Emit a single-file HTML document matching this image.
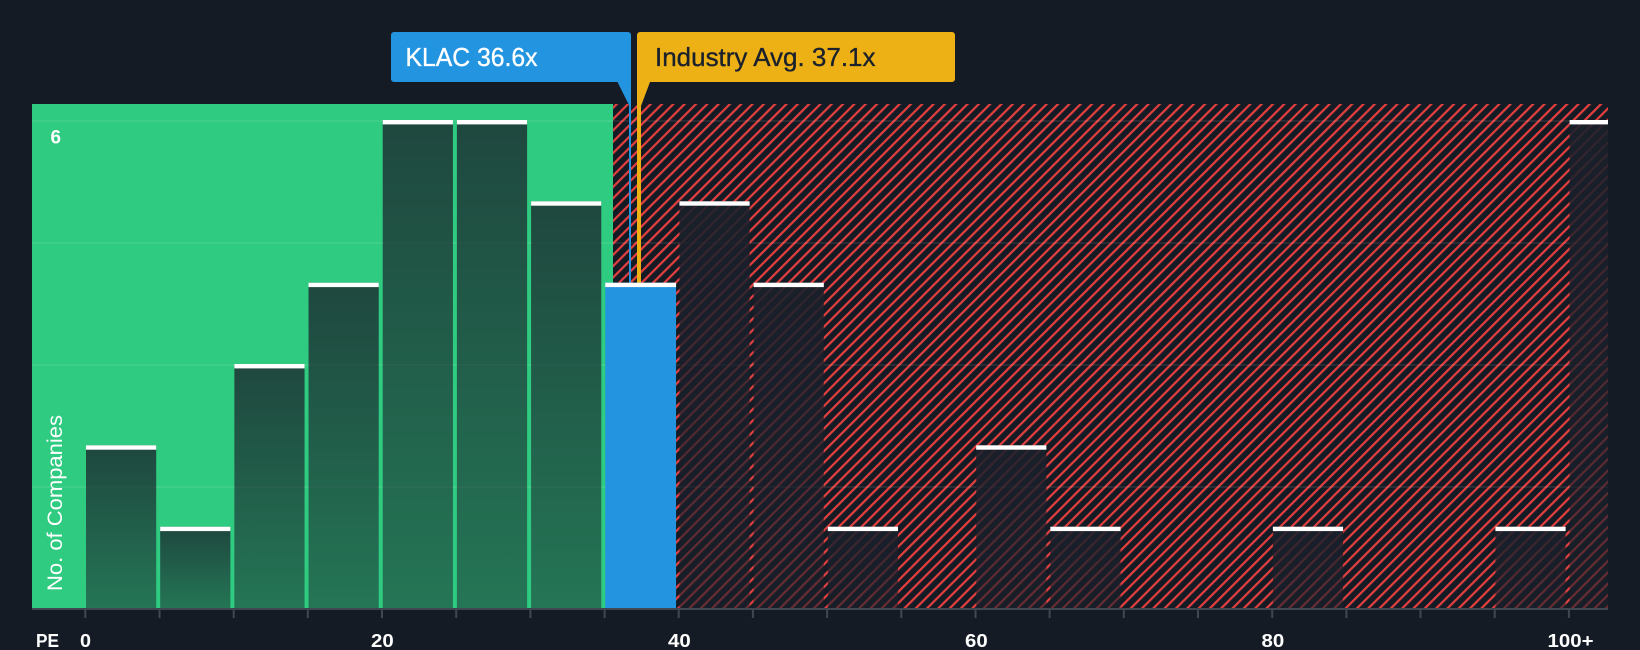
<!DOCTYPE html>
<html><head><meta charset="utf-8"><style>
html,body{margin:0;padding:0;background:#151b24;width:1640px;height:650px;overflow:hidden}
svg{display:block}
text{font-family:"Liberation Sans",sans-serif}
</style></head><body>
<svg width="1640" height="650" viewBox="0 0 1640 650" xmlns="http://www.w3.org/2000/svg">
<defs>
<pattern id="h" width="8" height="8" patternUnits="userSpaceOnUse" patternTransform="translate(6.5 0) rotate(45)"><rect width="8" height="8" fill="#151b24"/><rect x="0" width="2.2" height="8" fill="#e5403f"/></pattern>
<linearGradient id="b" x1="0" y1="0" x2="0" y2="1"><stop offset="0" stop-color="#1a202b" stop-opacity=".77"/><stop offset="1" stop-color="#1a202b" stop-opacity=".5"/></linearGradient>
<linearGradient id="r" x1="0" y1="0" x2="0" y2="1"><stop offset="0" stop-color="#1a202b" stop-opacity=".9"/><stop offset="1" stop-color="#1a202b" stop-opacity=".6"/></linearGradient>
</defs>
<rect width="1640" height="650" fill="#151b24"/>
<rect x="32" y="104" width="581" height="504" fill="#2ecb80"/>
<rect x="613" y="104" width="995" height="504" fill="url(#h)"/>
<g fill="#fff" fill-opacity=".08">
<rect x="32" y="120" width="1576" height="2"/><rect x="32" y="242" width="1576" height="2"/><rect x="32" y="364" width="1576" height="2"/><rect x="32" y="486" width="1576" height="2"/>
</g>
<g fill="url(#b)">
<rect x="86" y="445.3" width="70.2" height="162.7"/>
<rect x="160.18" y="526.7" width="70.2" height="81.3"/>
<rect x="234.36" y="364" width="70.2" height="244"/>
<rect x="308.54" y="282.7" width="70.2" height="325.3"/>
<rect x="382.72" y="120" width="70.2" height="488"/>
<rect x="456.9" y="120" width="70.2" height="488"/>
<rect x="531.08" y="201.3" width="70.2" height="406.7"/>
</g>
<g fill="url(#r)">
<rect x="679.44" y="201.3" width="70.2" height="406.7"/>
<rect x="753.62" y="282.7" width="70.2" height="325.3"/>
<rect x="827.8" y="526.7" width="70.2" height="81.3"/>
<rect x="976.16" y="445.3" width="70.2" height="162.7"/>
<rect x="1050.34" y="526.7" width="70.2" height="81.3"/>
<rect x="1272.88" y="526.7" width="70.2" height="81.3"/>
<rect x="1495.42" y="526.7" width="70.2" height="81.3"/>
<rect x="1569.6" y="120" width="38.4" height="488"/>
</g>
<rect x="629" y="104" width="2" height="180" fill="#2394e0"/>
<rect x="637" y="104" width="4" height="180" fill="#edb116"/>
<rect x="605.26" y="282.7" width="70.8" height="325.3" fill="#2394e0"/>
<g fill="#fff">
<rect x="86" y="445.3" width="70.2" height="4.4"/>
<rect x="160.18" y="526.7" width="70.2" height="4.4"/>
<rect x="234.36" y="364" width="70.2" height="4.4"/>
<rect x="308.54" y="282.7" width="70.2" height="4.4"/>
<rect x="382.72" y="120" width="70.2" height="4.4"/>
<rect x="456.9" y="120" width="70.2" height="4.4"/>
<rect x="531.08" y="201.3" width="70.2" height="4.4"/>
<rect x="605.26" y="282.7" width="70.8" height="4.4"/>
<rect x="679.44" y="201.3" width="70.2" height="4.4"/>
<rect x="753.62" y="282.7" width="70.2" height="4.4"/>
<rect x="827.8" y="526.7" width="70.2" height="4.4"/>
<rect x="976.16" y="445.3" width="70.2" height="4.4"/>
<rect x="1050.34" y="526.7" width="70.2" height="4.4"/>
<rect x="1272.88" y="526.7" width="70.2" height="4.4"/>
<rect x="1495.42" y="526.7" width="70.2" height="4.4"/>
<rect x="1569.6" y="120" width="38.4" height="4.4"/>
</g>
<rect x="32" y="608" width="1576" height="2" fill="#414751"/>
<g fill="#414751">
<rect x="84.3" y="610" width="2" height="8"/><rect x="158.5" y="610" width="2" height="8"/><rect x="232.7" y="610" width="2" height="8"/><rect x="306.8" y="610" width="2" height="8"/><rect x="381" y="610" width="2" height="8"/><rect x="455.2" y="610" width="2" height="8"/><rect x="529.4" y="610" width="2" height="8"/><rect x="603.6" y="610" width="2" height="8"/><rect x="677.7" y="610" width="2" height="8"/><rect x="751.9" y="610" width="2" height="8"/><rect x="826.1" y="610" width="2" height="8"/><rect x="900.3" y="610" width="2" height="8"/><rect x="974.5" y="610" width="2" height="8"/><rect x="1048.6" y="610" width="2" height="8"/><rect x="1122.8" y="610" width="2" height="8"/><rect x="1197" y="610" width="2" height="8"/><rect x="1271.2" y="610" width="2" height="8"/><rect x="1345.4" y="610" width="2" height="8"/><rect x="1419.5" y="610" width="2" height="8"/><rect x="1493.7" y="610" width="2" height="8"/><rect x="1567.9" y="610" width="2" height="8"/>
</g>
<path d="M394 32H628a3 3 0 0 1 3 3V106L629.5 106L617.5 82H394a3 3 0 0 1-3-3V35a3 3 0 0 1 3-3Z" fill="#2394e0"/>
<path d="M640 32H952a3 3 0 0 1 3 3V79a3 3 0 0 1-3 3H650L641 106H637V35a3 3 0 0 1 3-3Z" fill="#edb116"/>
<text x="405.5" y="66" font-size="26" fill="#fff" stroke="#fff" stroke-width=".35" textLength="132" lengthAdjust="spacingAndGlyphs">KLAC 36.6x</text>
<text x="655" y="66" font-size="26" fill="#1b212c" stroke="#1b212c" stroke-width=".35" textLength="220.5" lengthAdjust="spacingAndGlyphs">Industry Avg. 37.1x</text>
<text x="50.5" y="143.5" font-size="19" font-weight="bold" fill="#fff" textLength="10.5" lengthAdjust="spacingAndGlyphs">6</text>
<text transform="translate(62 591) rotate(-90)" font-size="21" fill="#fff" textLength="176" lengthAdjust="spacingAndGlyphs">No. of Companies</text>
<g font-size="18.5" font-weight="bold" fill="#fff">
<text x="36" y="647" textLength="23" lengthAdjust="spacingAndGlyphs">PE</text>
<text x="80" y="647" textLength="11" lengthAdjust="spacingAndGlyphs">0</text>
<text x="371" y="647" textLength="22.7" lengthAdjust="spacingAndGlyphs">20</text>
<text x="668" y="647" textLength="22.7" lengthAdjust="spacingAndGlyphs">40</text>
<text x="965" y="647" textLength="22.7" lengthAdjust="spacingAndGlyphs">60</text>
<text x="1261.5" y="647" textLength="22.7" lengthAdjust="spacingAndGlyphs">80</text>
<text x="1547.5" y="647" textLength="46" lengthAdjust="spacingAndGlyphs">100+</text>
</g>
</svg>
</body></html>
